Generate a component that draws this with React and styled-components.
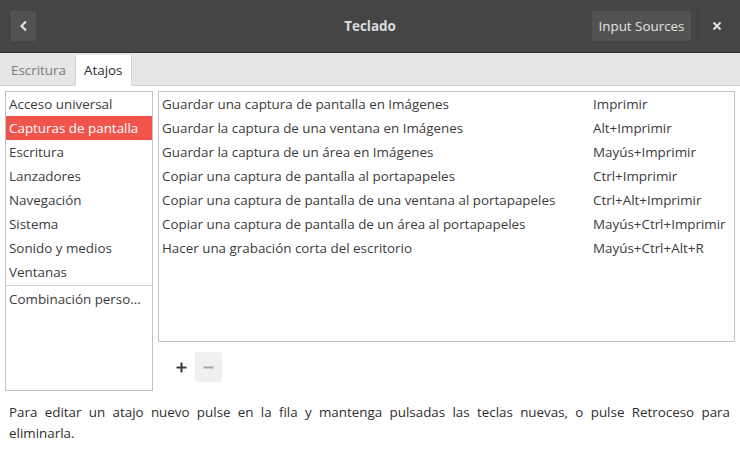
import React from "react";
import styled, { createGlobalStyle } from "styled-components";

const Global = createGlobalStyle`
  html, body { margin: 0; padding: 0; background: #fff; }
  body { font-family: "Open Sans", "Noto Sans", sans-serif; font-size: 13.4px; color: #3c3c3c; }
  * { box-sizing: border-box; }
`;

const Window = styled.div`
  width: 740px;
  height: 453px;
  display: flex;
  flex-direction: column;
  background: #fff;
  overflow: hidden;
`;

const HeaderBar = styled.div`
  height: 53px;
  background: #454545;
  border-bottom: 1px solid #2f2f2f;
  display: flex;
  align-items: center;
  padding: 0 0 0 11px;
  position: relative;
`;

const IconButton = styled.div`
  width: 25px;
  height: 30px;
  background: #525252;
  border-radius: 2px;
  display: flex;
  align-items: center;
  justify-content: center;
`;

const Title = styled.div`
  position: absolute;
  left: 0;
  right: 0;
  text-align: center;
  font-weight: 700;
  font-size: 13.4px;
  color: #dcdcdc;
  pointer-events: none;
`;

const Spacer = styled.div`
  flex: 1;
`;

const TextButton = styled.div`
  height: 30px;
  width: 99px;
  background: #525252;
  border-radius: 2px;
  color: #e4e4e4;
  display: flex;
  align-items: center;
  justify-content: center;
`;

const Separator = styled.div`
  width: 1px;
  height: 32px;
  background: #3d3d3d;
  margin-left: 6px;
`;

const CloseBox = styled.div`
  width: 37px;
  height: 30px;
  display: flex;
  align-items: center;
  justify-content: center;
  margin-right: 5px;
`;

const TabBar = styled.div`
  height: 33px;
  background: #e6e6e6;
  border-bottom: 1px solid #d0d0d0;
  display: flex;
  align-items: flex-end;
  padding-left: 2px;
`;

const Tab = styled.div`
  height: 31px;
  padding: 0 8px;
  display: flex;
  align-items: center;
  margin-bottom: -1px;
  color: ${(p) => (p.$active ? "#2e2e2e" : "#7a7a7a")};
  background: ${(p) => (p.$active ? "#fff" : "transparent")};
  border-left: 1px solid ${(p) => (p.$active ? "#d6d6d6" : "transparent")};
  border-right: 1px solid ${(p) => (p.$active ? "#d6d6d6" : "transparent")};
  border-bottom: 1px solid ${(p) => (p.$active ? "#fff" : "transparent")};
`;

const Body = styled.div`
  display: flex;
  gap: 5px;
  padding: 5px 5px 0 5px;
`;

const SideList = styled.div`
  width: 148px;
  height: 300px;
  border: 1px solid #c2c2c2;
  display: flex;
  flex-direction: column;
`;

const SideItem = styled.div`
  height: 24px;
  line-height: 24px;
  padding-left: 3px;
  white-space: nowrap;
  overflow: hidden;
  color: ${(p) => (p.$selected ? "#fff" : "#3c3c3c")};
  background: ${(p) => (p.$selected ? "#f0544c" : "transparent")};
`;

const SideSep = styled.div`
  height: 2px;
  border-top: 1px solid #d3d3d3;
  margin-top: 1px;
`;

const RightCol = styled.div`
  flex: 1;
  display: flex;
  flex-direction: column;
`;

const ShortcutList = styled.div`
  height: 251px;
  border: 1px solid #c2c2c2;
  display: flex;
  flex-direction: column;
`;

const ShortcutRow = styled.div`
  height: 24px;
  display: grid;
  grid-template-columns: 431px 1fr;
  align-items: center;
  padding-left: 3px;
  white-space: nowrap;
`;

const Actions = styled.div`
  display: flex;
  padding: 10px 0 0 10px;
`;

const SmallButton = styled.div`
  width: 27px;
  height: 30px;
  border-radius: 2px;
  background: ${(p) => (p.$disabled ? "#f0f0f0" : "transparent")};
  display: flex;
  align-items: center;
  justify-content: center;
`;

const Footer = styled.p`
  margin: 11px 10px 0 9px;
  text-align: justify;
  line-height: 21px;
  font-size: 13.4px;
  color: #2e2e2e;
  word-spacing: 3px;
`;

const categories = [
  "Acceso universal",
  "Capturas de pantalla",
  "Escritura",
  "Lanzadores",
  "Navegación",
  "Sistema",
  "Sonido y medios",
  "Ventanas",
];

const shortcuts = [
  ["Guardar una captura de pantalla en Imágenes", "Imprimir"],
  ["Guardar la captura de una ventana en Imágenes", "Alt+Imprimir"],
  ["Guardar la captura de un área en Imágenes", "Mayús+Imprimir"],
  ["Copiar una captura de pantalla al portapapeles", "Ctrl+Imprimir"],
  ["Copiar una captura de pantalla de una ventana al portapapeles", "Ctrl+Alt+Imprimir"],
  ["Copiar una captura de pantalla de un área al portapapeles", "Mayús+Ctrl+Imprimir"],
  ["Hacer una grabación corta del escritorio", "Mayús+Ctrl+Alt+R"],
];

export default function App() {
  return (
    <Window>
      <Global />
      <HeaderBar>
        <IconButton>
          <svg width="10" height="12" viewBox="0 0 10 12">
            <path d="M7 1.5 L2.5 6 L7 10.5" fill="none" stroke="#e8e8e8" strokeWidth="2" />
          </svg>
        </IconButton>
        <Title>Teclado</Title>
        <Spacer />
        <TextButton>Input Sources</TextButton>
        <Separator />
        <CloseBox>
          <svg width="10" height="10" viewBox="0 0 10 10">
            <path d="M1.5 1.5 L8.5 8.5 M8.5 1.5 L1.5 8.5" stroke="#e0e0e0" strokeWidth="2" />
          </svg>
        </CloseBox>
      </HeaderBar>
      <TabBar>
        <Tab>Escritura</Tab>
        <Tab $active>Atajos</Tab>
      </TabBar>
      <Body>
        <SideList>
          {categories.map((c, i) => (
            <SideItem key={c} $selected={i === 1}>{c}</SideItem>
          ))}
          <SideSep />
          <SideItem>Combinación perso...</SideItem>
        </SideList>
        <RightCol>
          <ShortcutList>
            {shortcuts.map(([name, key]) => (
              <ShortcutRow key={name}>
                <span>{name}</span>
                <span>{key}</span>
              </ShortcutRow>
            ))}
          </ShortcutList>
          <Actions>
            <SmallButton>
              <svg width="11" height="11" viewBox="0 0 11 11">
                <path d="M5.5 0.5 V10.5 M0.5 5.5 H10.5" stroke="#3a3a3a" strokeWidth="2" />
              </svg>
            </SmallButton>
            <SmallButton $disabled>
              <svg width="11" height="11" viewBox="0 0 11 11">
                <path d="M0.5 5.5 H10.5" stroke="#a8a8a8" strokeWidth="2" />
              </svg>
            </SmallButton>
          </Actions>
        </RightCol>
      </Body>
      <Footer>
        Para editar un atajo nuevo pulse en la fila y mantenga pulsadas las teclas nuevas, o pulse Retroceso para eliminarla.
      </Footer>
    </Window>
  );
}
